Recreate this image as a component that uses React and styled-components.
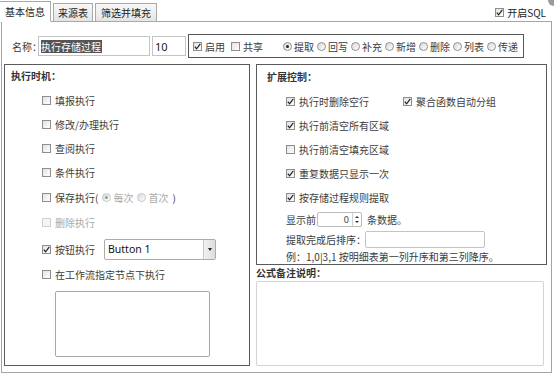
import React from 'react';
import styled, { createGlobalStyle } from 'styled-components';

const GlobalStyle = createGlobalStyle`
  html, body {
    margin: 0;
    padding: 0;
    background: #fff;
  }
  body {
    font-family: "Noto Sans CJK SC", "Noto Sans", sans-serif;
    font-size: 10px;
    color: #3c3c3c;
  }
`;

const Page = styled.div`
  width: 554px;
  height: 376px;
  position: relative;
  overflow: hidden;
  background: #fff;
`;

const TabBar = styled.div`
  display: flex;
  align-items: flex-end;
  height: 21px;
  padding-top: 1px;
  box-sizing: border-box;
`;

const Tab = styled.div`
  height: ${p => (p.$active ? '21px' : '19px')};
  margin-right: 2px;
  padding: 0 ${p => p.$px}px;
  box-sizing: border-box;
  display: flex;
  align-items: center;
  line-height: 1;
  border: 1px solid #a9a9a9;
  border-bottom: ${p => (p.$active ? '1px solid #fff' : '1px solid #a9a9a9')};
  border-left: ${p => (p.$active ? 'none' : '1px solid #a9a9a9')};
  background: ${p => (p.$active ? '#fff' : 'linear-gradient(#f8f8f8, #e4e4e4)')};
  margin-bottom: -1px;
  position: relative;
  z-index: 1;
  color: #222;
`;

const SqlToggle = styled.label`
  margin-left: auto;
  margin-right: 8px;
  align-self: center;
  display: flex;
  align-items: center;
  gap: 3px;
  color: #222;
  margin-top: 2px;
`;

const Corner = styled.div`
  position: absolute;
  right: -6px;
  top: -6px;
  width: 12px;
  height: 12px;
  border-radius: 50%;
  background: #9a9a9a;
`;

const Panel = styled.div`
  margin-left: 1px;
  width: 551px;
  height: 352px;
  box-sizing: border-box;
  border: 1px solid #a4a4a4;
  padding: 12px 4px 0 2px;
  display: flex;
  flex-direction: column;
  gap: 6px;
`;

const NameRow = styled.div`
  display: flex;
  align-items: center;
  height: 24px;
`;

const Label = styled.span`
  color: ${p => (p.$muted ? '#aaa' : 'inherit')};
  white-space: nowrap;
`;

const NameLabel = styled.span`
  margin-left: 8px;
  width: 26px;
  flex: none;
  white-space: nowrap;
`;

const Colon = styled.span`
  letter-spacing: -6px;
`;

const TextInput = styled.div`
  flex: none;
  width: ${p => p.$w}px;
  height: ${p => p.$h || 20}px;
  box-sizing: border-box;
  border: 1px solid #c4c4c4;
  border-radius: ${p => (p.$round ? '2px' : '0')};
  display: flex;
  align-items: center;
  padding: 0 2px;
  margin-right: ${p => p.$mr || 0}px;
  margin-left: ${p => p.$ml || 0}px;
  background: #fff;
  font-family: "Noto Sans", "Noto Sans CJK SC", sans-serif;
  font-size: 11px;
  color: #222;
`;

const Selected = styled.span`
  background: #555;
  color: #fff;
  font-family: "Noto Sans CJK SC", sans-serif;
  font-size: 10px;
  line-height: 13px;
  padding-right: 1px;
`;

const OptionBox = styled.div`
  flex: none;
  height: 24px;
  box-sizing: border-box;
  border: 1px solid #555;
  display: flex;
  align-items: center;
  padding: 0 5px 0 4px;
`;

const Item = styled.label`
  display: flex;
  align-items: center;
  gap: ${p => (p.$gap != null ? p.$gap : 3)}px;
  margin-right: ${p => p.$mr || 0}px;
  white-space: nowrap;
`;

const Box = styled.span`
  width: 9px;
  height: 9px;
  box-sizing: border-box;
  border: 1px solid ${p => (p.$disabled ? '#d0d0d0' : '#8e8e8e')};
  background: ${p => (p.$disabled ? '#f4f4f4' : 'linear-gradient(135deg, #e2e2e2, #fff)')};
  display: inline-flex;
  align-items: center;
  justify-content: center;
  flex: none;
`;

const Dot = styled.span`
  width: 9px;
  height: 9px;
  box-sizing: border-box;
  border-radius: 50%;
  border: 1px solid ${p => (p.$disabled ? '#c8c8c8' : '#909090')};
  background: linear-gradient(135deg, #d8d8d8, #fff);
  display: inline-flex;
  align-items: center;
  justify-content: center;
  flex: none;
  &::after {
    content: '';
    width: 3px;
    height: 3px;
    border-radius: 50%;
    background: ${p => (p.$on ? (p.$disabled ? '#999' : '#222') : 'transparent')};
  }
`;

const Check = ({ on, disabled }) => (
  <Box $disabled={disabled}>
    {on && (
      <svg width="7" height="7" viewBox="0 0 7 7">
        <path d="M0.8 3.6 L2.6 5.8 L6.3 0.8" fill="none" stroke="#222" strokeWidth="1.2" />
      </svg>
    )}
  </Box>
);

const Columns = styled.div`
  display: flex;
  gap: 6px;
  align-items: flex-start;
`;

const Fieldset = styled.div`
  width: ${p => p.$w}px;
  height: ${p => p.$h}px;
  box-sizing: border-box;
  border: 1px solid #5a5a5a;
  padding: ${p => p.$pt}px 0 0 ${p => p.$pl}px;
  display: flex;
  flex-direction: column;
`;

const Title = styled.div`
  font-weight: bold;
  height: 18px;
  line-height: 18px;
  color: #333;
  margin-bottom: 3px;
`;

const Row = styled.div`
  height: ${p => p.$h || 24}px;
  display: flex;
  align-items: center;
  padding-left: ${p => p.$indent}px;
  gap: ${p => p.$gap || 0}px;
  white-space: nowrap;
`;

const Select = styled.div`
  width: 112px;
  height: 21px;
  margin-left: 5px;
  box-sizing: border-box;
  border: 1px solid #acacac;
  border-radius: 2px;
  display: flex;
  align-items: stretch;
  font-family: "Noto Sans", sans-serif;
  font-size: 10.5px;
  color: #111;
`;

const SelectText = styled.span`
  flex: 1;
  display: flex;
  align-items: center;
  padding-left: 3px;
`;

const Arrow = styled.span`
  width: 11px;
  border-left: 1px solid #c8c8c8;
  background: linear-gradient(90deg, #f2f2f2, #dcdcdc);
  display: flex;
  align-items: center;
  justify-content: center;
  &::after {
    content: '';
    border-left: 2.5px solid transparent;
    border-right: 2.5px solid transparent;
    border-top: 3px solid #222;
  }
`;

const TextArea = styled.div`
  width: ${p => p.$w}px;
  height: ${p => p.$h}px;
  box-sizing: border-box;
  border: 1px solid ${p => p.$c || '#a8a8a8'};
  border-radius: 2px;
  margin-left: ${p => p.$ml || 0}px;
  margin-top: ${p => p.$mt || 0}px;
  background: #fff;
`;

const Spinner = styled.div`
  width: 45px;
  height: 15px;
  box-sizing: border-box;
  border: 1px solid #bcbcbc;
  border-radius: 2px;
  display: flex;
  margin: 0 5px 0 1px;
  font-family: "Noto Sans", sans-serif;
  font-size: 9px;
`;

const SpinValue = styled.span`
  flex: 1;
  text-align: right;
  padding-right: 3px;
  line-height: 13px;
`;

const SpinButtons = styled.span`
  width: 8px;
  border-left: 1px solid #d0d0d0;
  display: flex;
  flex-direction: column;
  align-items: center;
  justify-content: space-evenly;
`;

const Tri = styled.span`
  border-left: 2px solid transparent;
  border-right: 2px solid transparent;
  ${p => (p.$up ? 'border-bottom: 2px solid #333;' : 'border-top: 2px solid #333;')}
`;

const RightCol = styled.div`
  display: flex;
  flex-direction: column;
`;

const NotesLabel = styled.div`
  font-weight: bold;
  height: 16px;
  line-height: 16px;
  color: #333;
`;

const radios = ['提取', '回写', '补充', '新增', '删除', '列表', '传递'];

export default function App() {
  return (
    <Page>
      <GlobalStyle />
      <Corner />
      <TabBar>
        <Tab $active $px={5}>基本信息</Tab>
        <Tab $px={4}>来源表</Tab>
        <Tab $px={5}>筛选并填充</Tab>
        <SqlToggle>
          <Check on />
          开启SQL
        </SqlToggle>
      </TabBar>
      <Panel>
        <NameRow>
          <NameLabel>名称<Colon>：</Colon></NameLabel>
          <TextInput $w={112} $mr={2}>
            <Selected>执行存储过程</Selected>
          </TextInput>
          <TextInput $w={34} $mr={2}>10</TextInput>
          <OptionBox>
            <Item $mr={6}><Check on />启用</Item>
            <Item $mr={20}><Check />共享</Item>
            {radios.map((r, i) => (
              <Item key={r} $gap={2} $mr={i === radios.length - 1 ? 0 : 3}>
                <Dot $on={i === 0} />
                {r}
              </Item>
            ))}
          </OptionBox>
        </NameRow>
        <Columns>
          <Fieldset $w={246} $h={302} $pt={2} $pl={6}>
            <Title>执行时机：</Title>
            <Row $indent={31} $gap={4}><Check />填报执行</Row>
            <Row $indent={31} $gap={4}><Check />修改/办理执行</Row>
            <Row $indent={31} $gap={4}><Check />查阅执行</Row>
            <Row $indent={31} $gap={4}><Check />条件执行</Row>
            <Row $indent={31} $gap={4} $h={26}>
              <Check />保存执行(
              <Item $gap={2}><Dot $on $disabled /><Label $muted>每次</Label></Item>
              <Item $gap={2}><Dot $disabled /><Label $muted>首次</Label></Item>
              )
            </Row>
            <Row $indent={31} $gap={4}><Check disabled /><Label $muted>删除执行</Label></Row>
            <Row $indent={31} $gap={4} $h={30}>
              <Check on />按钮执行
              <Select>
                <SelectText>Button 1</SelectText>
                <Arrow />
              </Select>
            </Row>
            <Row $indent={31} $gap={4} $h={20}><Check />在工作流指定节点下执行</Row>
            <TextArea $w={155} $h={66} $ml={44} $mt={7} />
          </Fieldset>
          <RightCol>
            <Fieldset $w={291} $h={201} $pt={3} $pl={10}>
              <Title>扩展控制：</Title>
              <Row $indent={19}>
                <Item $mr={34} $gap={4}><Check on />执行时删除空行</Item>
                <Item $gap={4}><Check on />聚合函数自动分组</Item>
              </Row>
              <Row $indent={19} $gap={4}><Check on />执行前清空所有区域</Row>
              <Row $indent={19} $gap={4}><Check />执行前清空填充区域</Row>
              <Row $indent={19} $gap={4}><Check on />重复数据只显示一次</Row>
              <Row $indent={19} $gap={4}><Check on />按存储过程规则提取</Row>
              <Row $indent={19} $h={20}>
                显示前
                <Spinner>
                  <SpinValue>0</SpinValue>
                  <SpinButtons><Tri $up /><Tri /></SpinButtons>
                </Spinner>
                条数据。
              </Row>
              <Row $indent={19} $h={20}>
                提取完成后排序：
                <TextInput $w={120} $h={17} $ml={-1} $round />
              </Row>
              <Row $indent={19} $h={14}>例：1,0|3,1 按明细表第一列升序和第三列降序。</Row>
            </Fieldset>
            <NotesLabel>公式备注说明：</NotesLabel>
            <TextArea $w={288} $h={85} $c="#d4d4d4" />
          </RightCol>
        </Columns>
      </Panel>
    </Page>
  );
}
